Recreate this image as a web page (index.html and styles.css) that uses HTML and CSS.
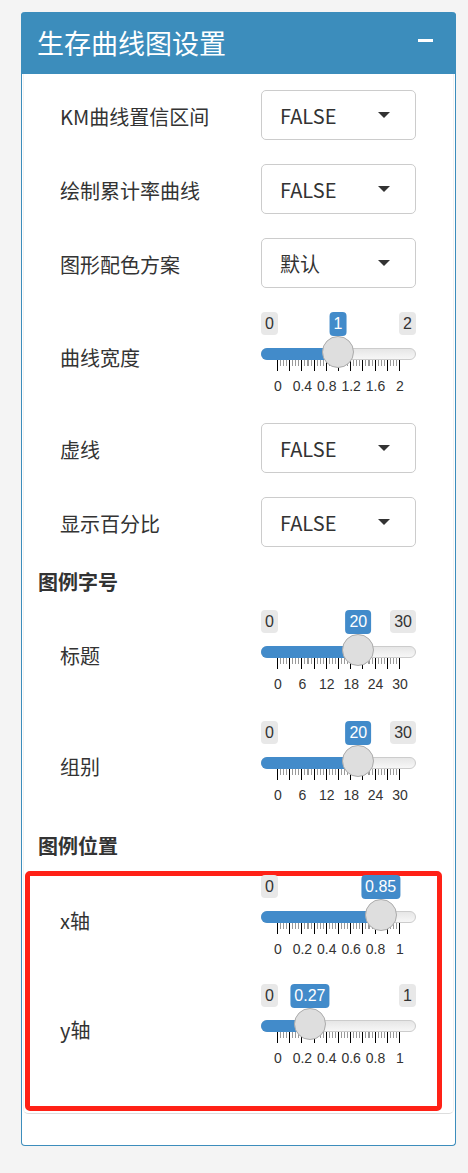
FILE: index.html
```html
<!DOCTYPE html>
<html lang="zh-CN">

<head>
    <meta charset="UTF-8">
    <meta name="viewport" content="width=device-width, initial-scale=1.0">
    <title>生存曲线图设置</title>
    <link rel="stylesheet" href="styles.css">
</head>

<body>

    <div class="box">
        <div class="box-header">
            <h3 class="box-title">生存曲线图设置</h3>
            <span class="box-collapse"></span>
        </div>

        <div class="box-body">
            <div class="form-row">
                <label>KM曲线置信区间</label>
                <div class="select"><span>FALSE</span><i class="caret"></i></div>
            </div>
            <div class="form-row">
                <label>绘制累计率曲线</label>
                <div class="select"><span>FALSE</span><i class="caret"></i></div>
            </div>
            <div class="form-row">
                <label>图形配色方案</label>
                <div class="select"><span>默认</span><i class="caret"></i></div>
            </div>
            <div class="form-row slider-row">
                <label>曲线宽度</label>
                <div class="slider">
                    <div class="slider-limits">
                        <span class="slider-tag">0</span>
                        <span class="slider-tag">2</span>
                    </div>
                    <span class="slider-value" style="left: 77px">1</span>
                    <div class="slider-track"><div class="slider-bar" style="width: 78px"></div></div>
                    <span class="slider-handle" style="left: 61px"></span>
                    <div class="slider-grid"></div>
                    <div class="slider-nums">
                        <span>0</span><span>0.4</span><span>0.8</span><span>1.2</span><span>1.6</span><span>2</span>
                    </div>
                </div>
            </div>
            <div class="form-row">
                <label>虚线</label>
                <div class="select"><span>FALSE</span><i class="caret"></i></div>
            </div>
            <div class="form-row">
                <label>显示百分比</label>
                <div class="select"><span>FALSE</span><i class="caret"></i></div>
            </div>

            <h4 class="section-title">图例字号</h4>
            <div class="form-row slider-row">
                <label>标题</label>
                <div class="slider">
                    <div class="slider-limits">
                        <span class="slider-tag">0</span>
                        <span class="slider-tag">30</span>
                    </div>
                    <span class="slider-value" style="left: 97.3px">20</span>
                    <div class="slider-track"><div class="slider-bar" style="width: 98.3px"></div></div>
                    <span class="slider-handle" style="left: 81.3px"></span>
                    <div class="slider-grid"></div>
                    <div class="slider-nums">
                        <span>0</span><span>6</span><span>12</span><span>18</span><span>24</span><span>30</span>
                    </div>
                </div>
            </div>
            <div class="form-row slider-row">
                <label>组别</label>
                <div class="slider">
                    <div class="slider-limits">
                        <span class="slider-tag">0</span>
                        <span class="slider-tag">30</span>
                    </div>
                    <span class="slider-value" style="left: 97.3px">20</span>
                    <div class="slider-track"><div class="slider-bar" style="width: 98.3px"></div></div>
                    <span class="slider-handle" style="left: 81.3px"></span>
                    <div class="slider-grid"></div>
                    <div class="slider-nums">
                        <span>0</span><span>6</span><span>12</span><span>18</span><span>24</span><span>30</span>
                    </div>
                </div>
            </div>

            <h4 class="section-title">图例位置</h4>
            <div class="highlight">
                <div class="form-row slider-row">
                    <label>x轴</label>
                    <div class="slider">
                        <div class="slider-limits">
                            <span class="slider-tag">0</span>
                            <span class="slider-tag hide">1</span>
                        </div>
                        <span class="slider-value" style="left: 119.7px">0.85</span>
                        <div class="slider-track"><div class="slider-bar" style="width: 120.7px"></div></div>
                        <span class="slider-handle" style="left: 103.7px"></span>
                        <div class="slider-grid"></div>
                        <div class="slider-nums">
                            <span>0</span><span>0.2</span><span>0.4</span><span>0.6</span><span>0.8</span><span>1</span>
                        </div>
                    </div>
                </div>
                <div class="form-row slider-row">
                    <label>y轴</label>
                    <div class="slider">
                        <div class="slider-limits">
                            <span class="slider-tag">0</span>
                            <span class="slider-tag">1</span>
                        </div>
                        <span class="slider-value" style="left: 48.9px">0.27</span>
                        <div class="slider-track"><div class="slider-bar" style="width: 49.9px"></div></div>
                        <span class="slider-handle" style="left: 32.9px"></span>
                        <div class="slider-grid"></div>
                        <div class="slider-nums">
                            <span>0</span><span>0.2</span><span>0.4</span><span>0.6</span><span>0.8</span><span>1</span>
                        </div>
                    </div>
                </div>
            </div>
        </div>

        <div class="box-footer"></div>
    </div>

</body>

</html>
```

FILE: styles.css
```css
body {
    margin: 0;
    padding: 12px 0 30px 21px;
    background-color: #f4f4f4;
    font-family: "Noto Sans CJK SC", "Noto Sans", sans-serif;
    color: #333;
}

.box {
    width: 435px;
    box-sizing: border-box;
    border: 1px solid #3c8dbc;
    border-top: 0;
    border-radius: 4px;
    background-color: #fff;
}

.box-header {
    display: flex;
    align-items: center;
    justify-content: space-between;
    height: 62px;
    margin: 0 -1px;
    padding: 0 23px 0 16px;
    background-color: #3c8dbc;
    border-radius: 4px 4px 0 0;
}

.box-title {
    margin: 0;
    font-size: 27px;
    font-weight: normal;
    line-height: 34px;
    color: #fff;
}

/* collapse button */
.box-collapse {
    width: 15px;
    height: 3px;
    margin-top: -5px;
    background-color: #fff;
}

.box-body {
    margin: 0 1px;
    padding: 16px 37px 2px 14px;
    border: 1px solid #f2f2f2;
    border-top: 0;
    border-bottom-color: #ddd;
    border-radius: 0 0 5px 5px;
}

.box-footer {
    height: 31px;
}

.form-row {
    display: grid;
    grid-template-columns: 1fr 155px;
    align-items: center;
    padding-left: 22px;
    margin-bottom: 24px;
}

.form-row label {
    font-size: 20px;
    line-height: 28px;
    padding-top: 3px;
}

.slider-row {
    margin-bottom: 23px;
}

.section-title {
    margin: -3px 0 14px;
    font-size: 20px;
    font-weight: bold;
    line-height: 28px;
}

.slider-row + .section-title {
    margin-top: 0;
}

/* select input */
.select {
    display: flex;
    align-items: center;
    justify-content: space-between;
    height: 50px;
    box-sizing: border-box;
    padding: 0 25px 0 18px;
    border: 1px solid #ccc;
    border-radius: 5px;
    font-size: 20px;
}

.caret {
    width: 0;
    height: 0;
    border-left: 6px solid transparent;
    border-right: 6px solid transparent;
    border-top: 6px solid #333;
}

/* range slider */
.slider {
    position: relative;
    height: 88px;
    font-family: "Liberation Sans", Arial, sans-serif;
}

.slider-limits {
    display: flex;
    justify-content: space-between;
    height: 24px;
}

.slider-tag,
.slider-value {
    height: 23px;
    padding: 0 4px;
    font-size: 16px;
    line-height: 23px;
    border-radius: 4px;
    background-color: #e8e8e8;
}

.slider-value {
    position: absolute;
    top: 0;
    height: 24px;
    line-height: 24px;
    transform: translateX(-50%);
    background-color: #428bca;
    color: #fff;
}

.hide {
    visibility: hidden;
}

.slider-track {
    height: 12px;
    margin-top: 12px;
    box-sizing: border-box;
    border: 1px solid #ccc;
    border-radius: 6px;
    background: linear-gradient(to bottom, #dedede -50%, #fff 150%);
}

.slider-bar {
    height: 12px;
    margin: -1px 0 0 -1px;
    border-radius: 6px 0 0 6px;
    background-color: #428bca;
}

.slider-handle {
    position: absolute;
    top: 24px;
    z-index: 2;
    width: 32px;
    height: 32px;
    box-sizing: border-box;
    border: 1px solid #ababab;
    border-radius: 50%;
    background-color: #dedede;
}

.slider-grid {
    width: 123px;
    height: 11px;
    margin-left: 16px;
    background-image:
        repeating-linear-gradient(to right, #000 0 1px, transparent 1px 12.2px),
        repeating-linear-gradient(to right, #999 0 1px, transparent 1px 3.05px);
    background-size: 100% 100%, 100% 6px;
    background-repeat: no-repeat;
}

.slider-nums {
    display: flex;
    justify-content: space-between;
    width: 122px;
    margin: 6px 0 0 17px;
    font-size: 14px;
    line-height: 18px;
}

.slider-nums span {
    display: flex;
    justify-content: center;
    width: 0;
    white-space: nowrap;
}

/* red annotation frame */
.highlight {
    margin: -3px -26px 0 -13px;
    padding: 0 21px 11px 8px;
    border: 5px solid #ff2116;
    border-radius: 5px;
}

.highlight .slider-row:first-child {
    margin-top: -1px;
    margin-bottom: 21px;
}

.highlight .slider-row:last-child {
    margin-bottom: 23px;
}
```
